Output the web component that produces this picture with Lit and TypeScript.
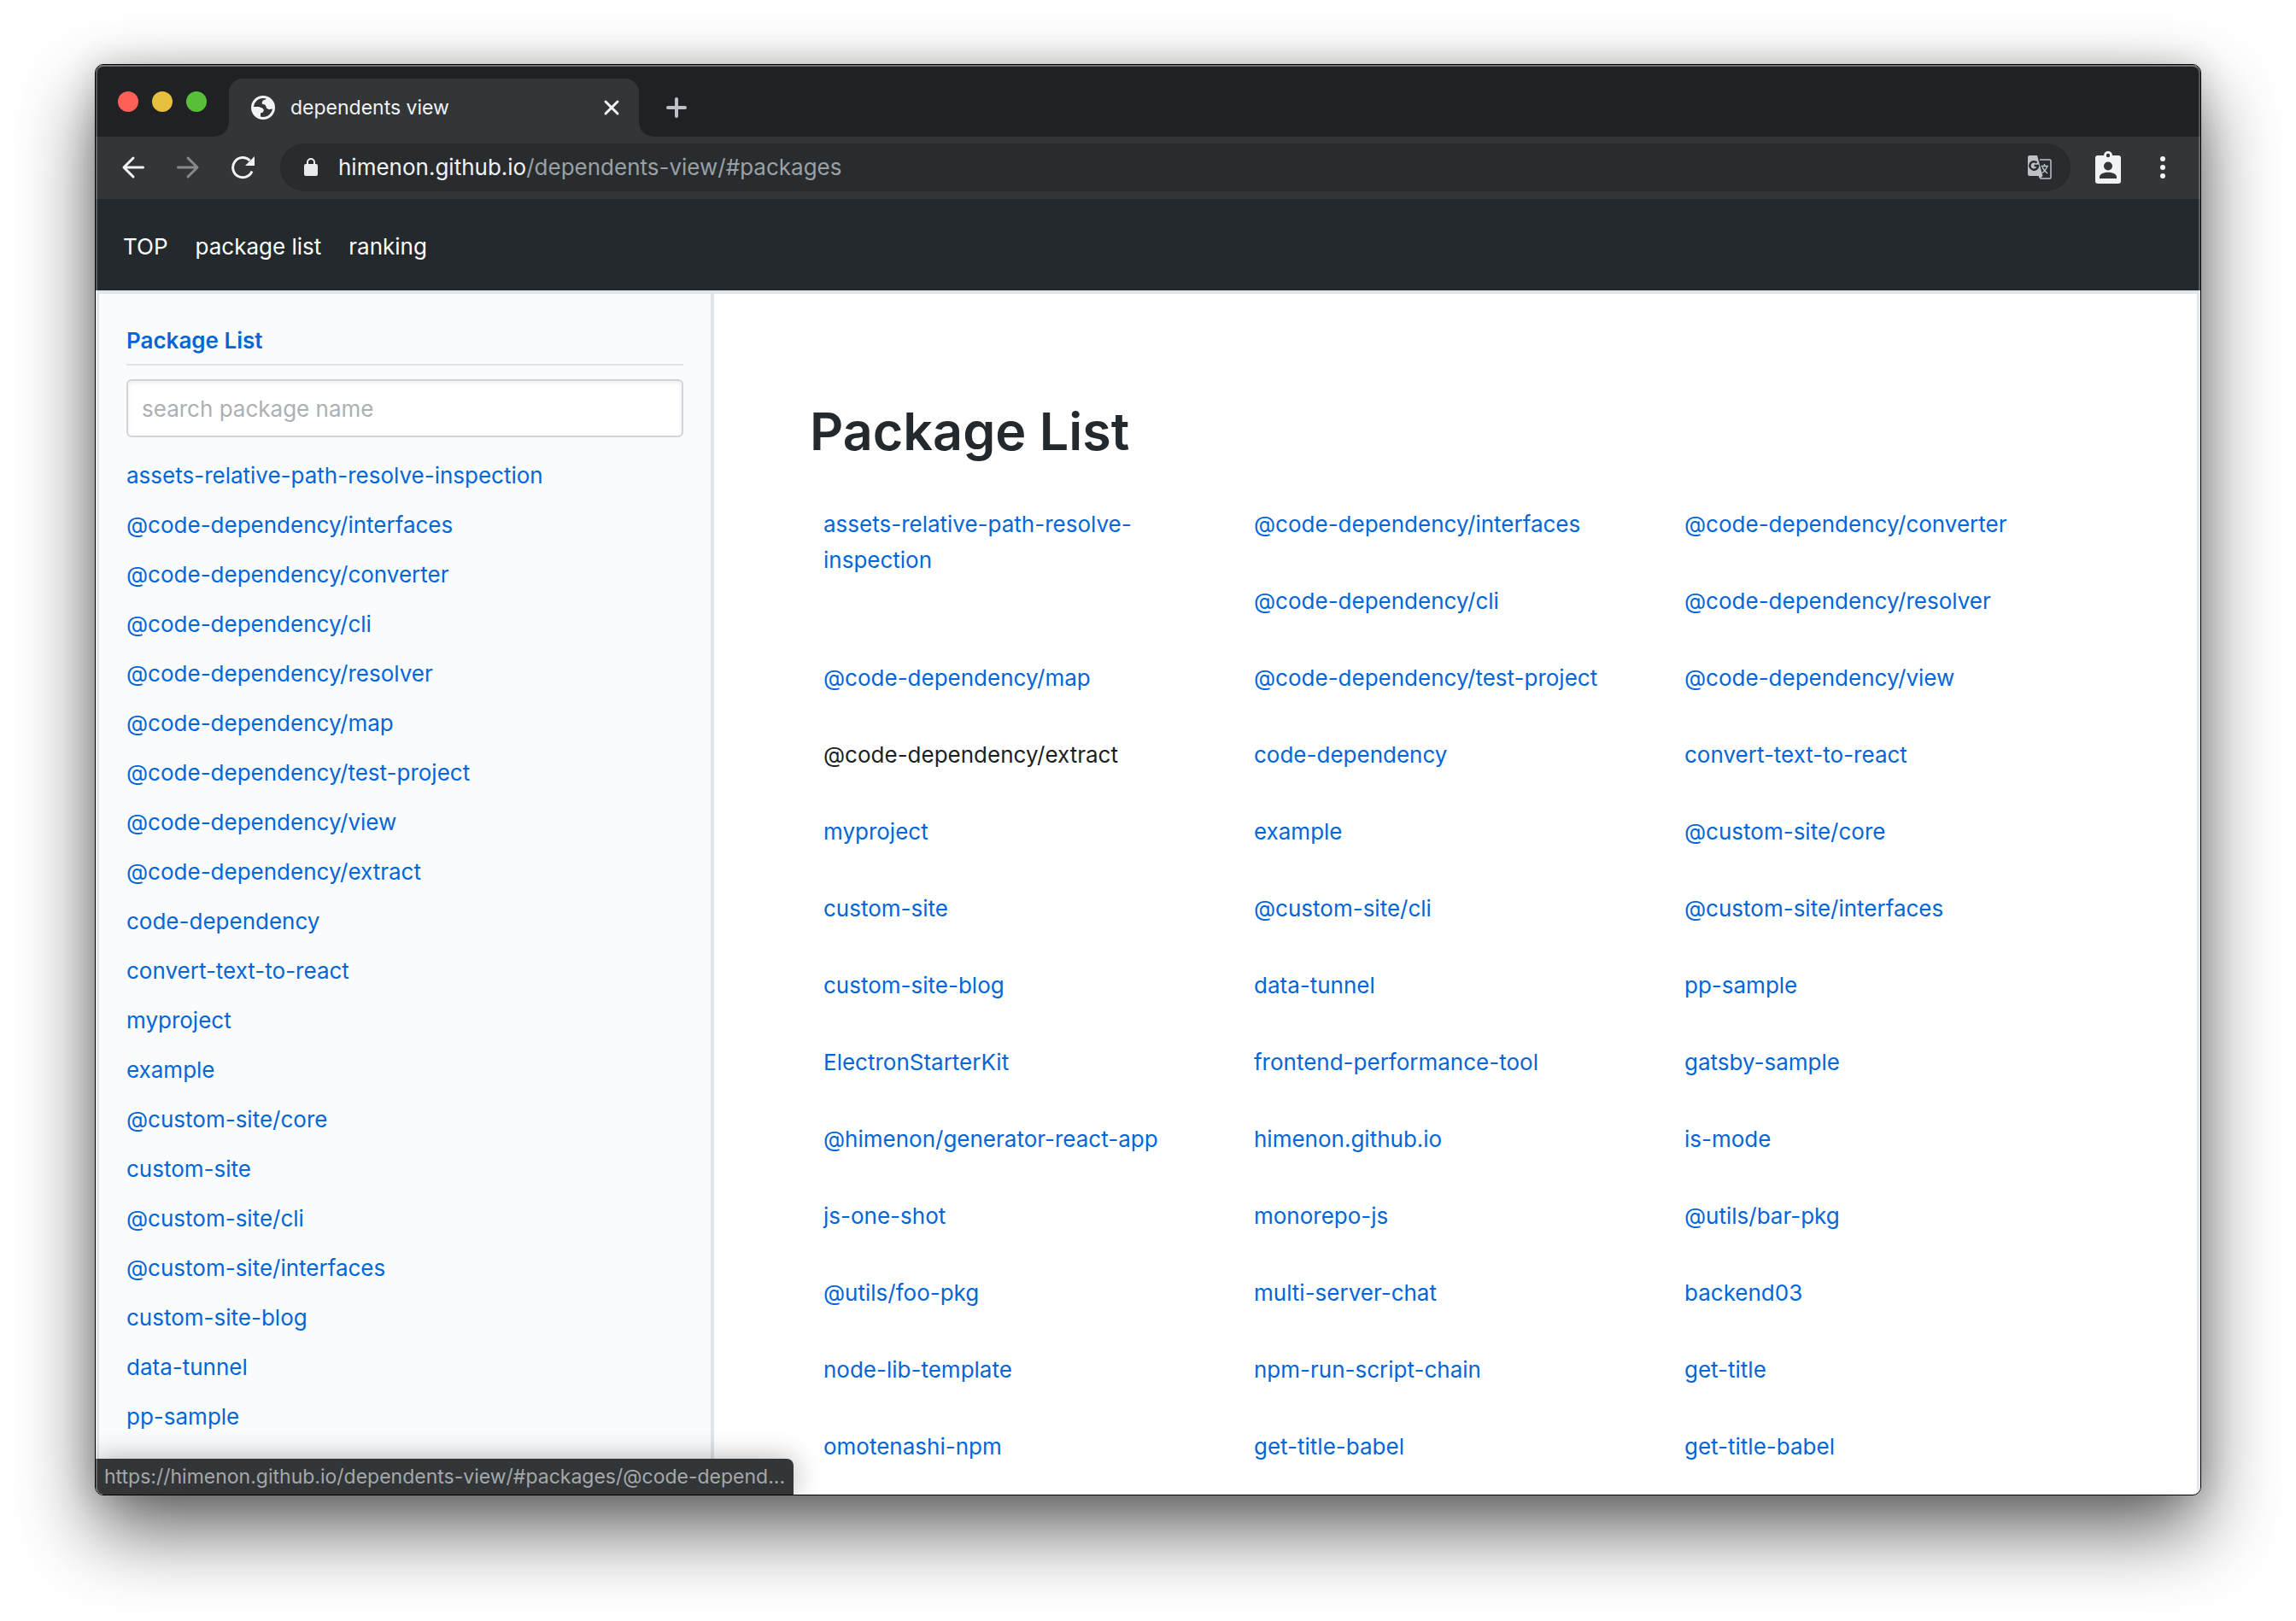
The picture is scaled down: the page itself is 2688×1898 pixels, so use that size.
import { LitElement, html, css } from "lit";
import { customElement } from "lit/decorators.js";

const PACKAGES = [
  "assets-relative-path-resolve-inspection",
  "@code-dependency/interfaces",
  "@code-dependency/converter",
  "@code-dependency/cli",
  "@code-dependency/resolver",
  "@code-dependency/map",
  "@code-dependency/test-project",
  "@code-dependency/view",
  "@code-dependency/extract",
  "code-dependency",
  "convert-text-to-react",
  "myproject",
  "example",
  "@custom-site/core",
  "custom-site",
  "@custom-site/cli",
  "@custom-site/interfaces",
  "custom-site-blog",
  "data-tunnel",
  "pp-sample",
  "ElectronStarterKit",
  "frontend-performance-tool",
  "gatsby-sample",
  "@himenon/generator-react-app",
  "himenon.github.io",
  "is-mode",
  "js-one-shot",
  "monorepo-js",
  "@utils/bar-pkg",
  "@utils/foo-pkg",
  "multi-server-chat",
  "backend03",
  "node-lib-template",
  "npm-run-script-chain",
  "get-title",
  "omotenashi-npm",
  "get-title-babel",
  "get-title-babel",
];

const SIDEBAR_COUNT = 20;
const HOVERED = "@code-dependency/extract";

const shared = css`
  *, *::before, *::after { box-sizing: border-box; }
  a { color: inherit; text-decoration: none; }
  button {
    display: flex;
    align-items: center;
    justify-content: center;
    padding: 0;
    border: 0;
    background: none;
    color: inherit;
    font: inherit;
  }
  svg { display: block; flex: none; }
  ul { list-style: none; margin: 0; padding: 0; }
`;

@customElement("browser-chrome")
export class BrowserChrome extends LitElement {
  static styles = [
    shared,
    css`
      :host { display: block; color: #f1f3f4; }
      .strip {
        display: flex;
        align-items: stretch;
        height: 84px;
        padding-top: 16px;
        background: #202124;
      }
      .lights { display: flex; gap: 16px; padding: 15px 26px 0; width: 156px; }
      .light { width: 24px; height: 24px; border-radius: 50%; flex: none; }
      .close { background: #ff5f57; }
      .minimize { background: #e6bf3c; }
      .expand { background: #58c038; }
      .tab {
        position: relative;
        display: flex;
        align-items: center;
        width: 480px;
        padding: 0 22px 0 26px;
        border-radius: 16px 16px 0 0;
        background: #323639;
        font-size: 23px;
      }
      .tab::before, .tab::after {
        content: "";
        position: absolute;
        bottom: 0;
        width: 16px;
        height: 16px;
      }
      .tab::before {
        right: 100%;
        background: radial-gradient(circle at 0 0, #202124 15px, #323639 16px);
      }
      .tab::after {
        left: 100%;
        background: radial-gradient(circle at 100% 0, #202124 15px, #323639 16px);
      }
      .title { flex: 1; padding-left: 18px; }
      .plus { width: 56px; margin-left: 16px; color: #bdc1c6; }
      .bar {
        display: flex;
        align-items: flex-start;
        gap: 8px;
        height: 73px;
        padding: 8px 16px 0;
        background: #323639;
      }
      .tool { width: 56px; height: 56px; }
      .off { color: #868a8c; }
      .address {
        flex: 1;
        display: flex;
        align-items: center;
        height: 56px;
        margin: 0 8px;
        padding: 0 22px 0 28px;
        border-radius: 28px;
        background: #282c2f;
        font-size: 26px;
      }
      .url { flex: 1; padding-left: 24px; }
      .path { color: #9aa0a6; }
    `,
  ];

  render() {
    return html`
      <div class="strip">
        <div class="lights">
          <button class="light close" aria-label="Close window"></button>
          <button class="light minimize" aria-label="Minimize window"></button>
          <button class="light expand" aria-label="Expand window"></button>
        </div>
        <div class="tab">
          <svg width="28" height="28" viewBox="0 0 28 28">
            <circle cx="14" cy="14" r="12.500" fill="#323639" stroke="#f1f3f4" stroke-width="3" />
            <path fill="#f1f3f4" d="M18.500 2.500L17 4.500l-3 1-1.200 2v2.300l3.200.7 1.500 2 .5 2.300 3 1.500 5.500-1.300A12.800 12.800 0 0 0 18.500 2.500z" />
            <path fill="#f1f3f4" d="M1.500 13h7.500l4.500 1.700 1.500 2.300-1.200 2.500-2.800 1v5.500A12.800 12.800 0 0 1 1.500 13z" />
          </svg>
          <span class="title">dependents view</span>
          <button aria-label="Close tab">
            <svg width="20" height="20" viewBox="0 0 20 20" fill="none" stroke="currentColor" stroke-width="3" stroke-linecap="round">
              <path d="M3 3l14 14M17 3L3 17" />
            </svg>
          </button>
        </div>
        <button class="plus" aria-label="New tab">
          <svg width="24" height="24" viewBox="0 0 24 24" fill="none" stroke="currentColor" stroke-width="4" stroke-linecap="round">
            <path d="M2 12h20M12 2v20" />
          </svg>
        </button>
      </div>
      <div class="bar">
        <button class="tool" aria-label="Back">
          <svg width="28" height="28" viewBox="0 0 28 28" fill="none" stroke="currentColor" stroke-width="3" stroke-linecap="round" stroke-linejoin="round">
            <path d="M25.500 14H3M14 3L3 14l11 11" />
          </svg>
        </button>
        <button class="tool off" aria-label="Forward">
          <svg width="28" height="28" viewBox="0 0 28 28" fill="none" stroke="currentColor" stroke-width="3" stroke-linecap="round" stroke-linejoin="round">
            <path d="M2.500 14H25M14 3l11 11-11 11" />
          </svg>
        </button>
        <button class="tool" aria-label="Reload">
          <svg width="28" height="28" viewBox="0 0 28 28">
            <path d="M25 18.500A11.600 11.600 0 1 1 22.500 6" fill="none" stroke="currentColor" stroke-width="3" />
            <path d="M28 1v11H17z" fill="currentColor" />
          </svg>
        </button>
        <div class="address">
          <svg width="16" height="22" viewBox="0 0 16 22">
            <rect y="7" width="16" height="14" rx="2" fill="#e8eaed" />
            <path d="M4 8V5a4 4 0 0 1 8 0v3" fill="none" stroke="#e8eaed" stroke-width="2" />
          </svg>
          <span class="url">himenon.github.io<span class="path">/dependents-view/#packages</span></span>
          <button aria-label="Translate this page">
            <svg width="28" height="28" viewBox="0 0 28 28">
              <path d="M14 5h11.500a1.500 1.500 0 0 1 1.500 1.500v19a1.500 1.500 0 0 1-1.500 1.500H15l-1.500-3" fill="none" stroke="#bdc1c6" stroke-width="1.500" />
              <path d="M2 0h9l6.500 24-3.500 3-1.500-3H2a2 2 0 0 1-2-2V2a2 2 0 0 1 2-2z" fill="#bdc1c6" />
              <path d="M10.500 8.500A4.800 4.800 0 1 0 12 12H7.500" fill="none" stroke="#282c2f" stroke-width="2.500" />
              <path d="M15.500 12.500H24M19.500 10v2.500M22.500 12.500c-.5 3-3 6-5.500 8M17 13.500c1 3 3.500 5.500 6 7.500" fill="none" stroke="#bdc1c6" stroke-width="1.500" />
            </svg>
          </button>
        </div>
        <button class="tool" aria-label="Profile">
          <svg width="30" height="40" viewBox="0 0 30 40">
            <rect y="6" width="30" height="33" rx="3" fill="#f1f3f4" />
            <circle cx="15" cy="6" r="5" fill="#f1f3f4" />
            <circle cx="15" cy="6" r="2.200" fill="#323639" />
            <circle cx="15" cy="18.500" r="5" fill="#323639" />
            <path d="M5 33v-2c0-3.500 6-5.200 10-5.200S25 27.500 25 31v2z" fill="#323639" />
          </svg>
        </button>
        <button class="tool" aria-label="Menu">
          <svg width="6" height="26" viewBox="0 0 6 26" fill="currentColor">
            <circle cx="3" cy="3" r="3" /><circle cx="3" cy="13" r="3" /><circle cx="3" cy="23" r="3" />
          </svg>
        </button>
      </div>
    `;
  }
}

@customElement("app-root")
export class AppRoot extends LitElement {
  static styles = [
    shared,
    css`
      :host {
        display: flex;
        min-height: 100vh;
        padding: 75px 111px 147px;
        box-sizing: border-box;
        background: #fff;
        overflow: hidden;
        font-family: Inter, "Liberation Sans", sans-serif;
        font-size: 26px;
        line-height: 42px;
        color: #24292e;
      }
      .window {
        position: relative;
        flex: 1;
        display: flex;
        flex-direction: column;
        min-width: 0;
        border: 1px solid #000;
        border-radius: 10px;
        overflow: hidden;
        background: #fff;
        box-shadow: 0 40px 90px rgba(0, 0, 0, 0.62), 0 0 36px rgba(0, 0, 0, 0.16);
      }
      .window::after {
        content: "";
        position: absolute;
        inset: 0;
        border-top: 2px solid rgba(255, 255, 255, 0.36);
        border-left: 2px solid rgba(255, 255, 255, 0.24);
        border-right: 2px solid rgba(255, 255, 255, 0.24);
        border-radius: 9px;
        pointer-events: none;
      }
      .nav {
        display: flex;
        align-items: center;
        gap: 32px;
        height: 107px;
        padding: 4px 32px 0;
        background: #24292e;
        color: #fff;
      }
      .body {
        flex: 1;
        display: grid;
        grid-template-columns: 720px 1fr;
        border: 4px solid #e1e4e8;
        border-bottom: 0;
      }
      .side {
        padding: 34px 32px 0;
        border-right: 4px solid #e1e4e8;
        background: #fafbfc;
        color: #0366d6;
      }
      .label {
        margin: 0 0 16px;
        padding-bottom: 6px;
        border-bottom: 2px solid #e1e4e8;
        font-size: 26px;
        font-weight: 600;
      }
      .search {
        display: block;
        width: 100%;
        height: 68px;
        margin-bottom: 16px;
        padding: 0 16px;
        border: 2px solid #d1d5da;
        border-radius: 6px;
        background: #fff;
        box-shadow: inset 0 2px 4px rgba(27, 31, 35, 0.08);
        font: inherit;
        color: #24292e;
      }
      .search::placeholder { color: #abb0b5; opacity: 1; }
      .item { padding: 8px 0; }
      .main { padding: 125px 112px 0; }
      .heading {
        margin: 0 0 28px;
        font-size: 61px;
        line-height: 72px;
        font-weight: 600;
      }
      .grid {
        display: grid;
        grid-template-columns: repeat(3, 1fr);
        grid-auto-rows: 90px;
        color: #0366d6;
      }
      .cell { padding: 24px 16px; }
      .tall { grid-row: span 2; }
      .hovered { color: #1b1f23; }
      .status {
        position: absolute;
        left: 0;
        bottom: 0;
        padding: 0 10px;
        border-radius: 0 8px 0 0;
        background: #323639;
        box-shadow: 0 0 32px rgba(0, 0, 0, 0.3);
        color: #a5a8aa;
        font-size: 23px;
        white-space: nowrap;
      }
    `,
  ];

  render() {
    return html`
      <div class="window">
        <browser-chrome></browser-chrome>
        <nav class="nav">
          <a href="#">TOP</a>
          <a href="#packages">package list</a>
          <a href="#ranking">ranking</a>
        </nav>
        <div class="body">
          <aside class="side">
            <h2 class="label"><a href="#packages">Package List</a></h2>
            <input class="search" type="text" placeholder="search package name" aria-label="search package name" />
            <ul>
              ${PACKAGES.slice(0, SIDEBAR_COUNT).map(
                (name) => html`<li class="item"><a href="#packages/${name}">${name}</a></li>`
              )}
            </ul>
          </aside>
          <main class="main">
            <h1 class="heading">Package List</h1>
            <ul class="grid">
              ${PACKAGES.map(
                (name, i) => html`<li class="cell ${i === 0 ? "tall" : ""}">
                  <a class=${name === HOVERED ? "hovered" : ""} href="#packages/${name}">${name}</a>
                </li>`
              )}
            </ul>
          </main>
        </div>
        <div class="status">https://himenon.github.io/dependents-view/#packages/@code-depend...</div>
      </div>
    `;
  }
}
